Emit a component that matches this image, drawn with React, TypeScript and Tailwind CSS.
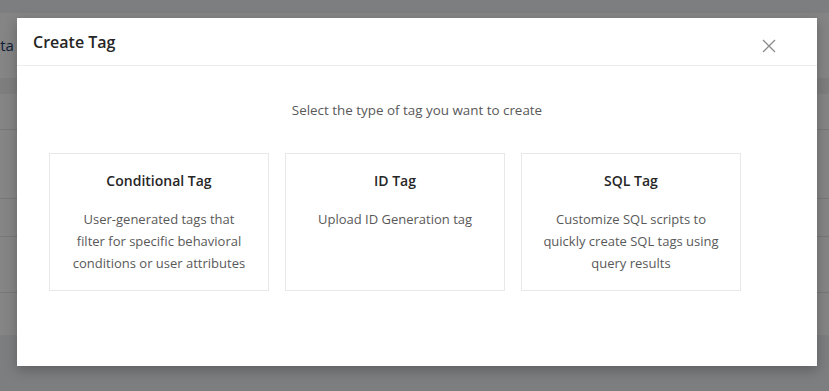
import React from "react";

interface TagTypeCardProps {
  title: string;
  description: string[];
}

const TagTypeCard: React.FC<TagTypeCardProps> = ({ title, description }) => {
  return (
    <div className="w-[220px] h-[138px] border border-[#e8e8e8] bg-white flex flex-col items-center pt-[16px] cursor-pointer hover:border-[#1890ff]">
      <h3 className="text-[14px] leading-[22px] font-semibold text-[#262626]">{title}</h3>
      <div className="mt-[16px] text-center text-[13px] leading-[22px] text-[#595959]">
        {description.map((line, i) => (
          <p key={i}>{line}</p>
        ))}
      </div>
    </div>
  );
};

const App: React.FC = () => {
  const tagTypes = [
    {
      title: "Conditional Tag",
      description: [
        "User-generated tags that",
        "filter for specific behavioral",
        "conditions or user attributes",
      ],
    },
    {
      title: "ID Tag",
      description: ["Upload ID Generation tag"],
    },
    {
      title: "SQL Tag",
      description: [
        "Customize SQL scripts to",
        "quickly create SQL tags using",
        "query results",
      ],
    },
  ];

  return (
    <div
      className="relative w-[829px] h-[391px] overflow-hidden bg-[#f0f2f5]"
      style={{ fontFamily: '"Open Sans", "Noto Sans", sans-serif' }}
    >
      {/* page behind the dialog */}
      <div className="mt-[13px] h-[322px] bg-white">
        <div className="h-[65px] flex items-center -ml-[19px]">
          <span className="text-[15px] text-[#1d3a6e] whitespace-nowrap">Data Tag</span>
        </div>
        <div className="h-[16px] bg-[#f2f2f2]" />
        <div className="h-[36px] border-b border-[#e6e6e6]" />
        <div className="h-[69px] border-b border-[#e6e6e6]" />
        <div className="h-[38px] border-b border-[#e6e6e6]" />
        <div className="h-[56px] border-b border-[#e6e6e6]" />
      </div>

      {/* mask */}
      <div className="absolute inset-0 bg-black/[0.48]" />

      {/* dialog */}
      <div className="absolute left-[17px] top-[18px] w-[800px] h-[348px] bg-white shadow-[0_4px_12px_rgba(0,0,0,0.25)]">
        <div className="h-[48px] flex items-center justify-between border-b border-[#ececec] pl-[16px]">
          <h2 className="text-[16px] font-semibold text-[#262626]">Create Tag</h2>
          <button className="mr-[41px] mt-[8px] text-[#8a8a8a]">
            <svg width="14" height="14" viewBox="0 0 14 14" fill="none" stroke="currentColor" strokeWidth="1.3">
              <path d="M1 1L13 13M13 1L1 13" />
            </svg>
          </button>
        </div>
        <div className="pt-[34px] px-[32px]">
          <p className="text-center text-[13.4px] leading-[20px] text-[#595959]">
            Select the type of tag you want to create
          </p>
          <div className="mt-[33px] flex gap-[16px]">
            {tagTypes.map((t, i) => (
              <TagTypeCard key={i} title={t.title} description={t.description} />
            ))}
          </div>
        </div>
      </div>
    </div>
  );
};

export default App;
